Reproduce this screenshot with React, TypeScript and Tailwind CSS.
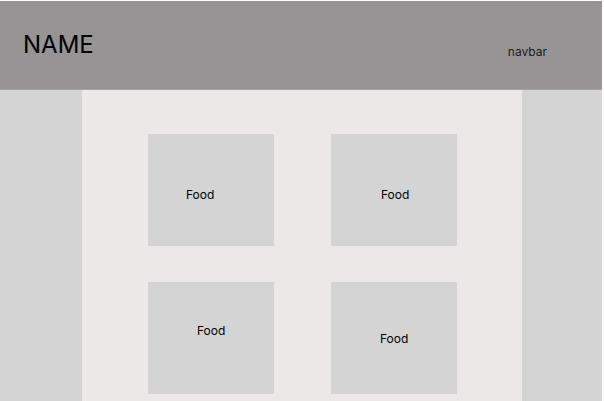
const FOOD = [
  { key: 1, pad: "pl-[38px] pt-[47px]" },
  { key: 2, pad: "pl-[50px] pt-[47px]" },
  { key: 3, pad: "pl-[49px] pt-[35px]" },
  { key: 4, pad: "pl-[49px] pt-[43px]" },
];

export default function App() {
  return (
    <div className="w-[604px] h-[401px] overflow-hidden bg-white text-black" style={{ fontFamily: "Inter, 'Noto Sans', sans-serif" }}>
      <div className="w-[602px] pt-px">
        <header className="h-[89px] bg-[#969494] border-b border-[#a6a4a4] flex items-center justify-between pl-[23px] pr-[55px]">
          <h1 className="text-[24px] leading-8 font-normal">NAME</h1>
          <span className="text-[12px] leading-4 mt-[13px] text-[#1a1a1a]">navbar</span>
        </header>
        <div className="flex h-[311px]">
          <aside className="w-[82px] bg-[#d4d4d4]" />
          <main className="w-[440px] bg-[#ede8e8] pt-[44px] pl-[66px]">
            <div className="grid grid-cols-[126px_126px] gap-x-[57px] gap-y-[36px]">
              {FOOD.map((f) => (
                <div key={f.key} className={`h-[112px] bg-[#d4d4d4] ${f.pad}`}>
                  <span className="text-[12px] leading-4">Food</span>
                </div>
              ))}
            </div>
          </main>
          <aside className="w-[80px] bg-[#d4d4d4]" />
        </div>
      </div>
    </div>
  );
}
